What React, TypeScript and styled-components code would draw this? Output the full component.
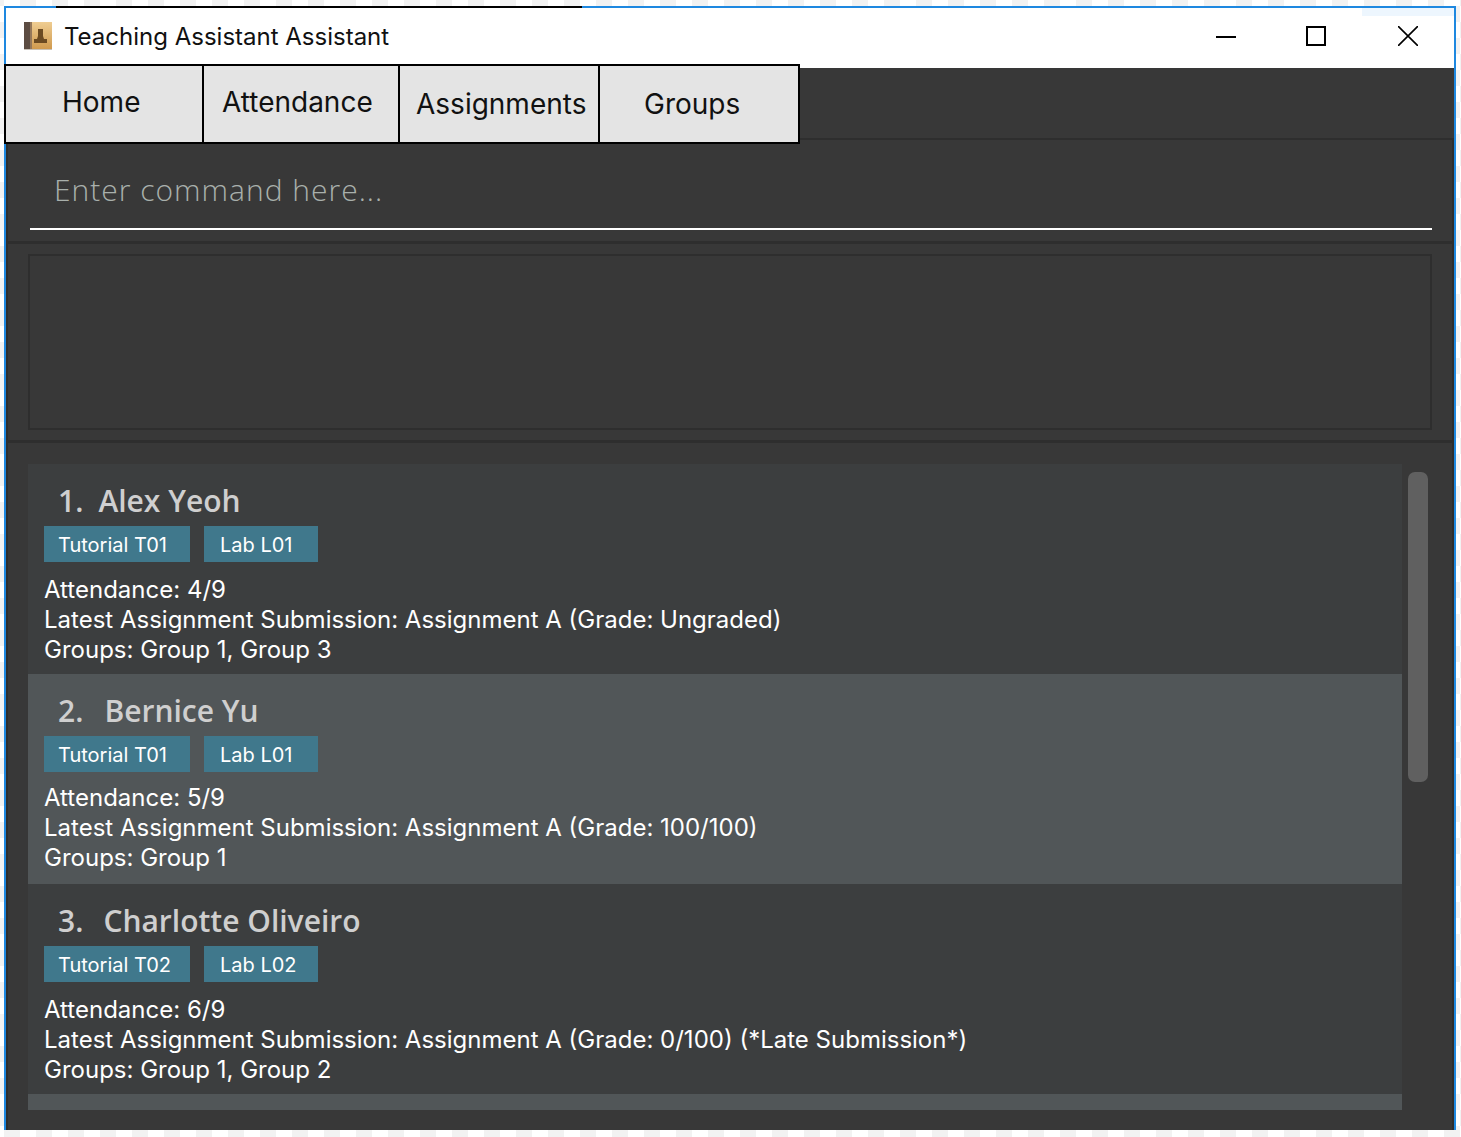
import React from "react";
import styled, { createGlobalStyle } from "styled-components";

const Global = createGlobalStyle`
  html, body { margin: 0; padding: 0; }
  body {
    width: 1461px;
    height: 1137px;
    overflow: hidden;
    background-color: #ffffff;
    background-image: conic-gradient(#f2f2f2 25%, #ffffff 0 50%, #f2f2f2 0 75%, #ffffff 0);
    background-size: 32px 32px;
    background-position: 20px 6px;
  }
`;

const Page = styled.div`
  padding: 6px 5px 7px 4px;
  box-sizing: border-box;
  height: 1137px;
`;

const Window = styled.div`
  position: relative;
  box-sizing: border-box;
  height: 1124px;
  border: 2px solid #1e88e0;
  border-bottom: 0;
  background: #383838;
  display: flex;
  flex-direction: column;
  font-family: Inter, "Liberation Sans", sans-serif;
`;

const TopEdge = styled.div`
  position: absolute;
  left: 50px;
  top: -2px;
  width: 526px;
  height: 2px;
  background: #000;
`;

const CornerTint = styled.div`
  position: absolute;
  right: 0;
  top: 0;
  width: 92px;
  height: 8px;
  background: #edf6fe;
`;

const TitleBar = styled.div`
  flex: none;
  box-sizing: border-box;
  height: 60px;
  background: #fff;
  display: flex;
  align-items: center;
  padding: 0 36px 4px 18px;
  color: #111;
  font-size: 24px;
`;

const AppIcon = styled.svg`
  flex: none;
  width: 28px;
  height: 28px;
  margin-right: 12px;
`;

const Title = styled.span`
  flex: 1;
`;

const Controls = styled.div`
  display: flex;
  align-items: center;
`;

const Control = styled.svg<{ $weight?: number; $before?: number }>`
  display: block;
  width: 20px;
  height: 20px;
  margin-left: ${(p) => p.$before ?? 0}px;
  fill: none;
  stroke: #000;
  stroke-width: ${(p) => p.$weight ?? 2};
`;

const TabBar = styled.div`
  flex: none;
  height: 70px;
  margin-left: -1px;
  border-bottom: 2px solid #2e2e2e;
  display: flex;
  align-items: flex-start;
  position: relative;
`;

const Tab = styled.div<{ $width: number; $lift: number; $pad: number }>`
  box-sizing: border-box;
  width: ${(p) => p.$width}px;
  height: 80px;
  margin-top: -4px;
  margin-left: -1px;
  margin-right: -1px;
  position: relative;
  background: #e4e4e4;
  border: 2px solid #000;
  color: #111;
  font-size: 28px;
  line-height: 72px;
  padding-top: ${(p) => p.$lift}px;
  padding-left: ${(p) => p.$pad}px;
  white-space: nowrap;
`;

const Body = styled.div`
  flex: 1;
  min-height: 0;
  display: flex;
  flex-direction: column;
  border-left: 2px solid #2e2e2e;
  border-right: 2px solid #2e2e2e;
`;

const CommandBox = styled.div`
  flex: none;
  height: 104px;
  box-sizing: border-box;
  padding: 0 20px 0 22px;
  border-bottom: 3px solid #2e2e2e;
`;

const CommandInput = styled.div`
  box-sizing: border-box;
  height: 90px;
  border-bottom: 2px solid #fff;
  padding-left: 24px;
  font-family: "Open Sans", "Noto Sans", sans-serif;
  font-weight: 300;
  font-size: 30px;
  letter-spacing: 1px;
  line-height: 100px;
  color: #a9b0ac;
  overflow: hidden;
`;

const ResultWrap = styled.div`
  flex: none;
  height: 199px;
  box-sizing: border-box;
  padding: 10px 20px;
  border-bottom: 3px solid #2e2e2e;
`;

const ResultBox = styled.div`
  box-sizing: border-box;
  height: 176px;
  border: 2px solid #2e2e2e;
`;

const ListWrap = styled.div`
  flex: 1;
  min-height: 0;
  padding: 21px 24px 0 20px;
  display: flex;
  gap: 6px;
  align-items: flex-start;
`;

const List = styled.div`
  width: 1374px;
  height: 646px;
  overflow: hidden;
`;

const Card = styled.div<{ $alt?: boolean; $gap: number }>`
  box-sizing: border-box;
  height: 210px;
  padding: 15px 0 0 16px;
  background: ${(p) => (p.$alt ? "#515658" : "#3c3e3f")};
  --detail-gap: ${(p) => p.$gap}px;
`;

const Name = styled.div<{ $gap: number }>`
  display: flex;
  height: 47px;
  padding-left: 14px;
  gap: ${(p) => p.$gap}px;
  font-family: "Open Sans", "Noto Sans", sans-serif;
  font-weight: 600;
  font-size: 30px;
  line-height: 44px;
  color: #cfcfcf;
`;

const Tags = styled.div`
  display: flex;
  gap: 14px;
`;

const Tag = styled.div<{ $width: number; $pad: number }>`
  box-sizing: border-box;
  width: ${(p) => p.$width}px;
  height: 36px;
  padding-left: ${(p) => p.$pad}px;
  background: #40788c;
  color: #fff;
  font-size: 20px;
  line-height: 38px;
`;

const Details = styled.div`
  margin-top: var(--detail-gap);
  color: #fff;
  font-size: 24px;
  line-height: 30px;
  white-space: nowrap;
`;

const Thumb = styled.div`
  flex: none;
  width: 20px;
  height: 310px;
  margin-top: 8px;
  border-radius: 7px;
  background: #606060;
`;

const people = [
  { n: "1.", name: "Alex Yeoh", t: "Tutorial T01", l: "Lab L01", a: "4/9", s: "Assignment A (Grade: Ungraded)", g: "Group 1, Group 3", gap: 13, nameGap: 15, alt: false },
  { n: "2.", name: "Bernice Yu", t: "Tutorial T01", l: "Lab L01", a: "5/9", s: "Assignment A (Grade: 100/100)", g: "Group 1", gap: 11, nameGap: 21, alt: true },
  { n: "3.", name: "Charlotte Oliveiro", t: "Tutorial T02", l: "Lab L02", a: "6/9", s: "Assignment A (Grade: 0/100) (*Late Submission*)", g: "Group 1, Group 2", gap: 13, nameGap: 20, alt: false },
];

export default function App() {
  return (
    <Page>
      <Global />
      <Window>
        <TopEdge />
        <CornerTint />
        <TitleBar>
          <AppIcon viewBox="0 0 28 28">
            <defs>
              <linearGradient id="gold" x1="0" y1="0" x2="0" y2="1">
                <stop offset="0" stopColor="#efcd92" />
                <stop offset="1" stopColor="#d09a4e" />
              </linearGradient>
            </defs>
            <rect x="0" y="0" width="28" height="27" fill="url(#gold)" />
            <rect x="0" y="27" width="28" height="1" fill="#c9c2b8" />
            <rect x="0" y="0" width="6" height="27" fill="#5c4c42" />
            <rect x="6" y="0" width="2" height="27" fill="#94775a" />
            <path d="M14 7h5v7l1 3h3v4H10v-4h3l1-3z" fill="#6b4a22" />
          </AppIcon>
          <Title>Teaching Assistant Assistant</Title>
          <Controls>
            <Control viewBox="0 0 20 20"><path d="M0 11h20" /></Control>
            <Control viewBox="0 0 20 20" $before={70}><rect x="1" y="1" width="18" height="18" /></Control>
            <Control viewBox="0 0 20 20" $before={72} $weight={1.6}><path d="M0 0l20 20M20 0L0 20" /></Control>
          </Controls>
        </TitleBar>
        <TabBar>
          <Tab $width={200} $lift={0} $pad={56}>Home</Tab>
          <Tab $width={198} $lift={0} $pad={18}>Attendance</Tab>
          <Tab $width={202} $lift={2} $pad={16}>Assignments</Tab>
          <Tab $width={202} $lift={2} $pad={44}>Groups</Tab>
        </TabBar>
        <Body>
          <CommandBox>
            <CommandInput>Enter command here...</CommandInput>
          </CommandBox>
          <ResultWrap>
            <ResultBox />
          </ResultWrap>
          <ListWrap>
            <List>
              {people.map((p) => (
                <Card key={p.n} $alt={p.alt} $gap={p.gap}>
                  <Name $gap={p.nameGap}>
                    <span>{p.n}</span>
                    <span>{p.name}</span>
                  </Name>
                  <Tags>
                    <Tag $width={146} $pad={14}>{p.t}</Tag>
                    <Tag $width={114} $pad={16}>{p.l}</Tag>
                  </Tags>
                  <Details>
                    Attendance: {p.a}
                    <br />
                    Latest Assignment Submission: {p.s}
                    <br />
                    Groups: {p.g}
                  </Details>
                </Card>
              ))}
              <Card $alt $gap={0} />
            </List>
            <Thumb />
          </ListWrap>
        </Body>
      </Window>
    </Page>
  );
}
